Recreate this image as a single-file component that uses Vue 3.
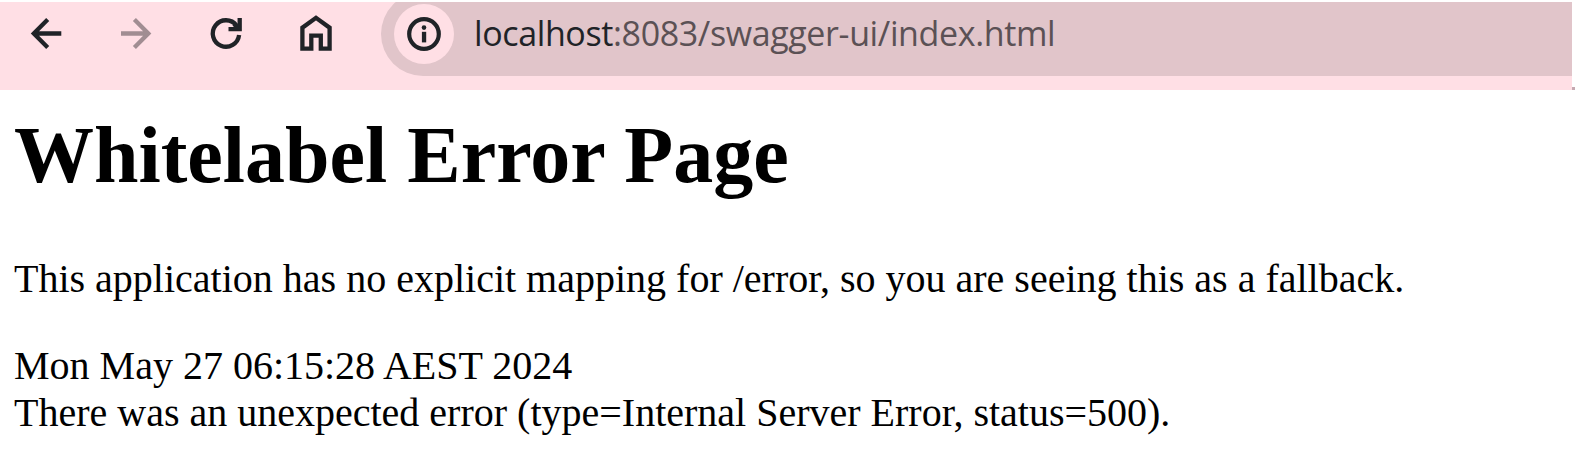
<script setup>
const message = 'This application has no explicit mapping for /error, so you are seeing this as a fallback.'
const timestamp = 'Mon May 27 06:15:28 AEST 2024'
const detail = 'There was an unexpected error (type=Internal Server Error, status=500).'
</script>

<template>
  <div class="window">
    <header class="toolbar">
      <nav class="nav">
        <svg class="icon" viewBox="0 0 90 63">
          <path d="M60.3 31.5H33M46.7 17.6L32.8 31.5L46.7 45.4" />
        </svg>
        <svg class="icon disabled" viewBox="0 0 90 63">
          <path d="M30 31.5H57M43.4 17.6L57.3 31.5L43.4 45.4" />
        </svg>
        <svg class="icon" viewBox="0 0 90 63">
          <path d="M58.1 33A13.2 13.2 0 1 1 55.6 23.6" />
          <path d="M58.7 16V27.1H47.5M53 22L58 27" />
        </svg>
        <svg class="icon" viewBox="0 0 90 63">
          <path d="M31.4 46.7V25.7L45 15.8L58.6 25.7V46.7H49.8V33.7H40.3V46.7Z" />
        </svg>
      </nav>
      <div class="address">
        <span class="info">
          <svg width="60" height="60" viewBox="0 0 60 60">
            <circle class="ring" cx="30" cy="30" r="14.8" />
            <circle cx="30" cy="23.6" r="2.3" />
            <rect x="27.9" y="27.8" width="4.3" height="10.6" />
          </svg>
        </span>
        <span class="url"><span class="host">localhost</span><span class="path">:8083/swagger-ui/index.html</span></span>
      </div>
      <i class="edge"></i>
    </header>
    <main class="page">
      <h1>Whitelabel Error Page</h1>
      <p>{{ message }}</p>
      <div class="line">{{ timestamp }}</div>
      <div class="line detail">{{ detail }}</div>
    </main>
  </div>
</template>

<style>
body { margin: 0; background: #fff; }
</style>

<style scoped>
.window { display: flow-root; height: 474px; overflow: hidden; background: #fff; }
.toolbar {
  display: flex;
  align-items: flex-start;
  height: 88px;
  margin-top: 2px;
  padding-left: 1px;
  box-sizing: border-box;
  overflow: hidden;
  background: linear-gradient(to right, #ffdfe5 1572px, #fff 1572px);
}
.nav { display: flex; }
.icon { display: block; width: 90px; height: 63px; fill: none; stroke: #202327; stroke-width: 4.3; }
.disabled { stroke: #a18d92; }
.address {
  display: flex;
  align-items: center;
  width: 1191px;
  height: 84px;
  margin: -10.4px 0 0 20px;
  padding-left: 12.5px;
  box-sizing: border-box;
  border-radius: 42px 0 0 42px;
  background: #e1c5ca;
}
.info { width: 60px; height: 60px; border-radius: 50%; background: #ffdfe5; }
.info svg { display: block; fill: #202327; }
.ring { fill: none; stroke: #202327; stroke-width: 4.2; }
.url {
  margin: -1px 0 0 20.5px;
  font-family: "Open Sans", "Noto Sans", sans-serif;
  font-size: 34px;
  line-height: 46px;
  letter-spacing: -0.38px;
  white-space: nowrap;
}
.host { color: #202327; }
.path { color: #5b5155; }
.edge { width: 3px; height: 3px; margin-top: 85px; background: #c5a9b1; }
.page {
  padding: 19px 14px 0;
  font-family: "Liberation Serif", "Times New Roman", serif;
  font-size: 40px;
  line-height: 47px;
  color: #000;
  white-space: nowrap;
}
h1 { margin: 0; font-size: 80px; line-height: 92px; font-weight: 700; }
p { margin: 54px 0 40px; }
</style>
